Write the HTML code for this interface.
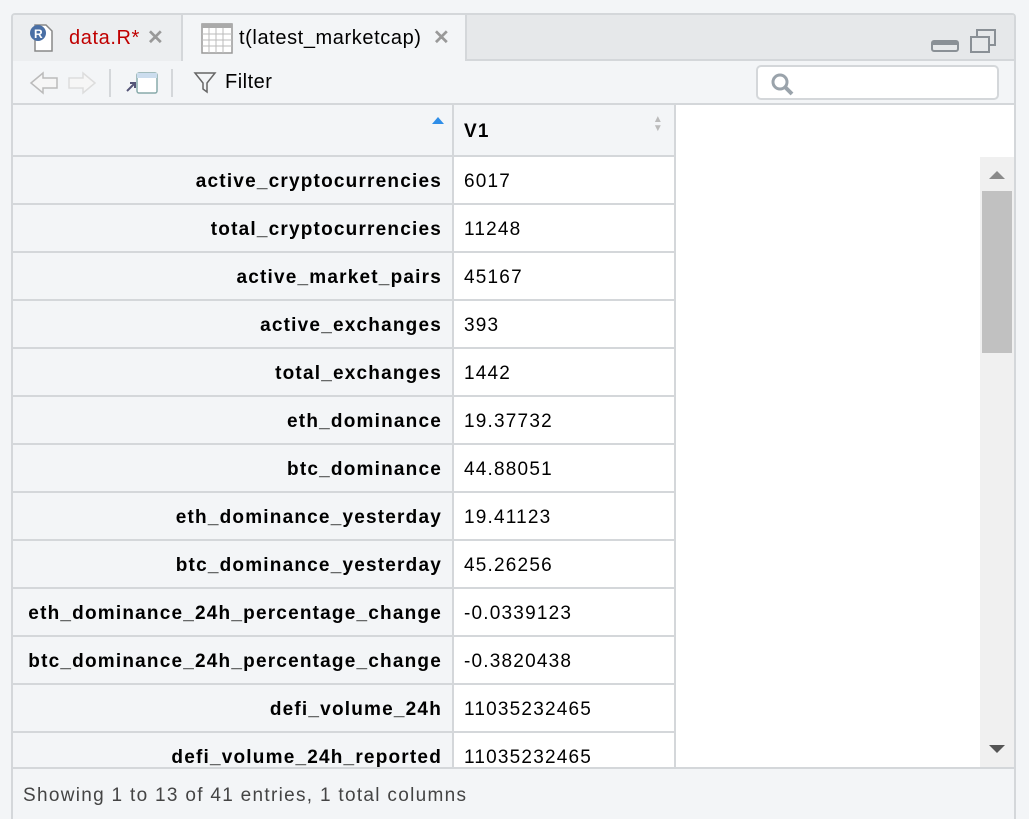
<!DOCTYPE html>
<html><head><style>
*{box-sizing:border-box;margin:0;padding:0}
body{width:1029px;height:819px;background:#f3f5f7;font-family:"Liberation Sans",sans-serif;position:relative;overflow:hidden;color:#000}
.panel{position:absolute;left:11px;top:13px;width:1005px;height:806px;border:2px solid #d4d7da;border-bottom:none;border-radius:4px 4px 0 0;background:#fff;overflow:hidden}
.tabbar{position:absolute;left:0;top:0;width:100%;height:46px;background:#e6e8ea;border-bottom:2px solid #d4d7da}
.tab{position:absolute;top:0;height:46px;font-size:20px;line-height:46px;letter-spacing:0.6px}
.tab1{left:0;width:170px;background:#eceef0;border-right:2px solid #d4d7da}
.tab2{left:170px;width:284px;background:#f3f5f7;height:48px;border-right:2px solid #d4d7da}
.x{color:#999;font-weight:bold;font-size:20px}
.toolbar{position:absolute;left:0;top:46px;width:100%;height:44px;background:#f3f5f7;border-bottom:2px solid #d4d7da}
.search{position:absolute;left:743px;top:4px;width:243px;height:35px;border:2px solid #d4d7da;border-radius:5px;background:#fff}
table{position:absolute;left:-2px;top:88px;border-collapse:collapse;font-size:19px;letter-spacing:1.2px}
td,th{border:2px solid #d4d7da;height:48px;padding:4px 10px 0}
td.k{width:441px;text-align:right;font-weight:bold;background:#f3f5f7}
td.v{width:222px;background:#fff;padding-left:10px}
th{height:52px;background:#f3f5f7;text-align:left;position:relative}
.footer{position:absolute;left:0;top:752px;width:100%;height:60px;background:#f3f5f7;border-top:2px solid #d4d7da;font-size:19px;color:#444;padding:16px 10px;letter-spacing:1.3px}
.sb{position:absolute;left:967px;top:142px;width:34px;height:610px;background:#f0f0f0}
.thumb{position:absolute;left:2px;top:34px;width:30px;height:162px;background:#c1c1c1}
</style></head><body>
<div class="panel">
 <div class="tabbar">
  <div class="tab tab1">
   <svg style="position:absolute;left:16px;top:8px" width="26" height="30"><path d="M6 2h11l6 6v20H6z" fill="#fff" stroke="#888" stroke-width="1.5"/><circle cx="9" cy="10" r="8" fill="#4a6fa5"/><text x="5" y="15" font-size="12" font-weight="bold" fill="#fff" font-family="Liberation Sans">R</text></svg>
   <span style="position:absolute;left:56px;color:#c00000">data.R*</span>
   <span class="x" style="position:absolute;left:134px">✕</span>
  </div>
  <div class="tab tab2">
   <svg style="position:absolute;left:18px;top:8px" width="32" height="32"><rect x="1" y="1" width="30" height="29" fill="#fff" stroke="#999" stroke-width="1.5"/><rect x="1" y="1" width="30" height="4" fill="#aaa"/><path d="M8 5v25M15 5v25M22 5v25M1 11h30M1 17h30M1 23h30" stroke="#bbb" stroke-width="1"/></svg>
   <span style="position:absolute;left:56px">t(latest_marketcap)</span>
   <span class="x" style="position:absolute;left:250px">✕</span>
  </div>
  <svg style="position:absolute;left:918px;top:12px" width="70" height="30"><rect x="1" y="14" width="26" height="10" rx="2" fill="none" stroke="#8a9096" stroke-width="2"/><rect x="1" y="14" width="26" height="4" fill="#8a9096"/><rect x="46" y="3" width="18" height="15" fill="none" stroke="#8a9096" stroke-width="2"/><rect x="40" y="10" width="18" height="15" fill="#e6e8ea" stroke="#8a9096" stroke-width="2"/></svg>
 </div>
 <div class="toolbar">
  <svg style="position:absolute;left:16px;top:10px" width="80" height="24"><path d="M2 12l12-10v5h14v10H14v5z" fill="#f6f6f6" stroke="#bbb" stroke-width="1.5"/><path d="M66 12L54 2v5H40v10h14v5z" fill="#f6f6f6" stroke="#ddd" stroke-width="1.5"/></svg>
  <div style="position:absolute;left:96px;top:8px;width:2px;height:28px;background:#d4d7da"></div>
  <svg style="position:absolute;left:112px;top:10px" width="34" height="26"><rect x="12" y="2" width="20" height="20" rx="2" fill="#fff" stroke="#8aa" stroke-width="1.5"/><rect x="12" y="2" width="20" height="5" fill="#cde"/><path d="M2 20l8-8M5 12h5v5" stroke="#557" stroke-width="2" fill="none"/></svg>
  <div style="position:absolute;left:158px;top:8px;width:2px;height:28px;background:#d4d7da"></div>
  <svg style="position:absolute;left:180px;top:10px" width="26" height="24"><path d="M2 2h20l-8 10v9l-4-3v-6z" fill="none" stroke="#666" stroke-width="1.5"/></svg>
  <span style="position:absolute;left:212px;top:10px;font-size:20px;letter-spacing:0.5px">Filter</span>
  <div class="search"><svg style="position:absolute;left:12px;top:5px" width="28" height="24"><circle cx="10" cy="10" r="7" fill="none" stroke="#9aa3ab" stroke-width="3"/><path d="M15 15l7 7" stroke="#9aa3ab" stroke-width="4"/></svg></div>
 </div>
 <table>
  <tr><th style="width:441px"><span style="position:absolute;right:8px;top:12px;border:6px solid transparent;border-bottom:7px solid #2f8ee8;border-top:0"></span></th><th style="width:222px;font-weight:bold">V1<span style="position:absolute;right:10px;top:10px;color:#bbb;font-size:10px;line-height:9px">▲<br>▼</span></th></tr>
  <tr><td class="k">active_cryptocurrencies</td><td class="v">6017</td></tr>
  <tr><td class="k">total_cryptocurrencies</td><td class="v">11248</td></tr>
  <tr><td class="k">active_market_pairs</td><td class="v">45167</td></tr>
  <tr><td class="k">active_exchanges</td><td class="v">393</td></tr>
  <tr><td class="k">total_exchanges</td><td class="v">1442</td></tr>
  <tr><td class="k">eth_dominance</td><td class="v">19.37732</td></tr>
  <tr><td class="k">btc_dominance</td><td class="v">44.88051</td></tr>
  <tr><td class="k">eth_dominance_yesterday</td><td class="v">19.41123</td></tr>
  <tr><td class="k">btc_dominance_yesterday</td><td class="v">45.26256</td></tr>
  <tr><td class="k">eth_dominance_24h_percentage_change</td><td class="v">-0.0339123</td></tr>
  <tr><td class="k">btc_dominance_24h_percentage_change</td><td class="v">-0.3820438</td></tr>
  <tr><td class="k">defi_volume_24h</td><td class="v">11035232465</td></tr>
  <tr><td class="k">defi_volume_24h_reported</td><td class="v">11035232465</td></tr>
 </table>
 <div class="sb"><div class="thumb"></div>
  <div style="position:absolute;left:9px;top:14px;border:8px solid transparent;border-bottom:8px solid #8a8a8a;border-top:0"></div>
  <div style="position:absolute;left:9px;top:588px;border:8px solid transparent;border-top:8px solid #555;border-bottom:0"></div>
 </div>
 <div class="footer">Showing 1 to 13 of 41 entries, 1 total columns</div>
</div>
</body></html>
